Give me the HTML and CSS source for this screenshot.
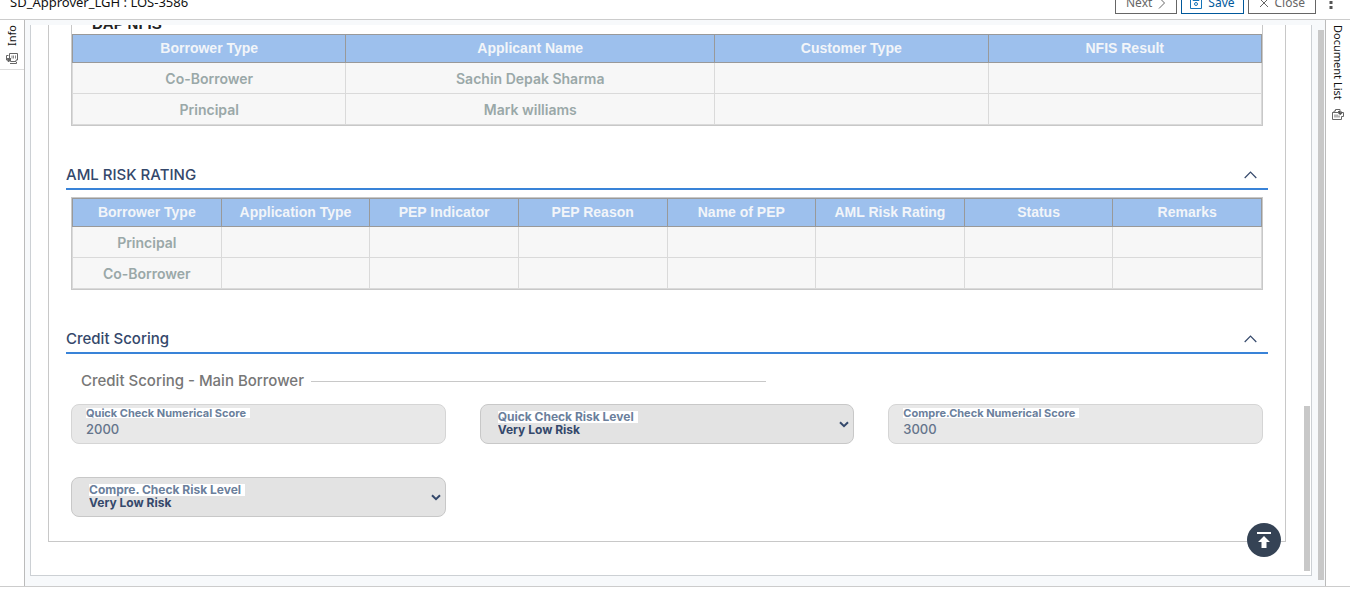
FILE: index.html
```
<!DOCTYPE html>
<html lang="en">
<head>
<meta charset="utf-8">
<title>SD_Approver_LGH : LOS-3586</title>
<link rel="stylesheet" href="styles.css">
</head>
<body>
<div class="app">
  <header class="topbar">
    <h1 class="topbar-title">SD_Approver_LGH : LOS-3586</h1>
    <div class="actions">
      <button class="btn" type="button">Next
        <svg width="8" height="12" viewBox="0 0 8 12"><path d="M1 .5 6.500 6 1 11.500" fill="none" stroke="currentColor"/></svg>
      </button>
      <button class="btn btn-save" type="button">
        <svg width="12" height="12" viewBox="0 0 12 12"><path d="M.5.5h11v11H.5zM3 1v2.500h6V1" fill="none" stroke="#1473b8"/><circle cx="6" cy="7" r="1.500" fill="none" stroke="#1473b8"/></svg>
        Save</button>
      <button class="btn" type="button">
        <svg width="10" height="10" viewBox="0 0 10 10"><path d="M1 1l8 8M9 1l-8 8" fill="none" stroke="currentColor"/></svg>
        Close</button>
      <button class="more" type="button" aria-label="More">
        <svg width="4" height="14" viewBox="0 0 4 14"><path d="M.5 1h3v3h-3zM.5 6h3v3h-3zM.5 11h3v3h-3z" fill="currentColor"/></svg>
      </button>
    </div>
  </header>

  <div class="workspace">
    <aside class="rail rail-left">
      <button class="rail-tab rail-info" type="button">
        <span class="rail-text rail-text-up">Info</span>
        <svg width="12" height="11" viewBox="0 0 12 11"><path d="M3.500.5h8v6.500H10v1.500H4.500V7h-1zM2.500 2.500h-2V7H2M2 5v3.500h1.500M4 10.500h6.500V9" fill="none" stroke="#666"/><path d="M6 2.500v3M7.500 2.500v3M9.500 2.500v3" stroke="#888" fill="none"/><path d="M1 5h4v3H2z" fill="#666"/></svg>
      </button>
    </aside>

    <main class="stage">
      <div class="panel">
        <div class="card">
          <section class="grid-box">
            <h2 class="grid-title">DAP NFIS</h2>
            <table class="grid">
              <colgroup><col class="col-base"><col class="col-wide"><col class="col-base"><col class="col-base"></colgroup>
              <thead><tr><th>Borrower Type</th><th>Applicant Name</th><th>Customer Type</th><th>NFIS Result</th></tr></thead>
              <tbody>
                <tr><td>Co-Borrower</td><td>Sachin Depak Sharma</td><td></td><td></td></tr>
                <tr><td>Principal</td><td>Mark williams</td><td></td><td></td></tr>
              </tbody>
            </table>
          </section>

          <div class="section-head">
            <h2>AML RISK RATING</h2>
            <button class="collapse" type="button" aria-label="Collapse AML risk rating"><svg width="13" height="8" viewBox="0 0 13 8"><path d="M.7 7 6.500 1.200 12.300 7" fill="none" stroke="currentColor" stroke-width="1.200"/></svg></button>
          </div>
          <section class="grid-box">
            <table class="grid">
              <thead><tr><th>Borrower Type</th><th>Application Type</th><th>PEP Indicator</th><th>PEP Reason</th><th>Name of PEP</th><th>AML Risk Rating</th><th>Status</th><th>Remarks</th></tr></thead>
              <tbody>
                <tr><td>Principal</td><td></td><td></td><td></td><td></td><td></td><td></td><td></td></tr>
                <tr><td>Co-Borrower</td><td></td><td></td><td></td><td></td><td></td><td></td><td></td></tr>
              </tbody>
            </table>
          </section>

          <div class="section-head">
            <h2>Credit Scoring</h2>
            <button class="collapse" type="button" aria-label="Collapse credit scoring"><svg width="13" height="8" viewBox="0 0 13 8"><path d="M.7 7 6.500 1.200 12.300 7" fill="none" stroke="currentColor" stroke-width="1.200"/></svg></button>
          </div>
          <section class="scoring">
            <h3 class="sub-title">Credit Scoring - Main Borrower</h3>
            <div class="fields">
              <div class="field">
                <label for="quick-score">Quick Check Numerical Score</label>
                <input id="quick-score" type="text" value="2000" readonly>
              </div>
              <div class="field field-select">
                <label for="quick-risk">Quick Check Risk Level</label>
                <select id="quick-risk"><option>Very Low Risk</option></select>
                <svg class="caret" width="10" height="7" viewBox="0 0 10 7"><path d="M1 1.200 5 5.200 9 1.200" fill="none" stroke="currentColor" stroke-width="2"/></svg>
              </div>
              <div class="field">
                <label for="compre-score">Compre.Check Numerical Score</label>
                <input id="compre-score" type="text" value="3000" readonly>
              </div>
              <div class="field field-select">
                <label for="compre-risk">Compre. Check Risk Level</label>
                <select id="compre-risk"><option>Very Low Risk</option></select>
                <svg class="caret" width="10" height="7" viewBox="0 0 10 7"><path d="M1 1.200 5 5.200 9 1.200" fill="none" stroke="currentColor" stroke-width="2"/></svg>
              </div>
            </div>
          </section>
        </div>
        <span class="scroll-thumb"></span>
        <button class="to-top" type="button" aria-label="Back to top">
          <svg width="14" height="17" viewBox="0 0 14 17"><path d="M0 0h14v2H0zM7 4l6 6H9.500v6h-5v-6H1z" fill="#fff"/></svg>
        </button>
      </div>
      <div class="scroll-track"></div>
    </main>

    <aside class="rail rail-right">
      <button class="rail-tab" type="button">
        <span class="rail-text">Document List</span>
        <svg width="12" height="11" viewBox="0 0 12 11"><path d="M.5 3.500H2V2h1.500V.5H8V2M.5 3.500v7h9v-3M.5 3.500h6M3 5.500v3M5 5.500v3M7 6.500v2M9.500 7.500h2v-4H9V2" fill="none" stroke="#666"/><path d="M6 2h2.500v1.500H11L8.500 6 6.500 5z" fill="#555"/></svg>
      </button>
    </aside>
  </div>
</div>
</body>
</html>
```
FILE: styles.css
```
* { box-sizing: border-box; }
body {
  margin: 0;
  background: #fff;
  font-family: "Inter", "Liberation Sans", sans-serif;
}
button { font: inherit; color: inherit; background: none; border: 0; padding: 0; }
svg { display: block; flex: none; }
h1, h2, h3 { margin: 0; }

.app {
  display: grid;
  grid-template-rows: 20px minmax(0, 1fr);
  height: 100vh;
  padding-bottom: 15px;
  overflow: hidden;
}

/* Top bar */
.topbar {
  display: flex;
  align-items: flex-end;
  justify-content: space-between;
  padding: 0 16px 5px 10px;
  border-bottom: 1px solid #ccc;
  overflow: hidden;
  font-family: "Noto Sans", sans-serif;
}
.topbar-title { font-size: 13px; line-height: 24px; font-weight: 400; color: #111; }
.actions { display: flex; align-items: center; gap: 4px; }
.btn {
  display: flex;
  align-items: center;
  gap: 6px;
  height: 25px;
  padding: 2px 10px 0;
  border: 1px solid #666;
  font-size: 12px;
  line-height: 20px;
  color: #666;
}
.btn-save { padding: 2px 8px 0; border-color: #00589b; color: #00589b; }
.more { padding: 0 1px 0 9px; color: #555; }

/* Workspace */
.workspace {
  display: grid;
  grid-template-columns: 25px minmax(0, 1fr) 25px;
  border-bottom: 1px solid #ccc;
  min-height: 0;
}
.rail-left { border-right: 1px solid #bbb; }
.rail-right { border-left: 1px solid #bbb; }
.rail-tab {
  display: flex;
  flex-direction: column;
  align-items: center;
  gap: 9px;
  width: 100%;
  padding: 5px 0;
}
.rail-info { gap: 7px; border-bottom: 1px solid #ddd; }
.rail-text {
  writing-mode: vertical-rl;
  font: 11px/16px "Noto Sans", sans-serif;
  color: #111;
}
.rail-text-up { transform: rotate(180deg); }

.stage {
  display: flex;
  gap: 6px;
  min-height: 0;
  padding: 5px 1px 10px 5px;
  background: #f7f9fb;
}
.scroll-track { width: 6px; margin: 5px 0 -4px; background: #c8c8c8; }
.panel {
  position: relative;
  flex: 1;
  min-width: 0;
  display: flex;
  flex-direction: column;
  justify-content: flex-end;
  padding: 0 25px 33px 17px;
  border: 1px solid #ccd0d4;
  border-top: 0;
  background: #fff;
  overflow: hidden;
}
.card { border: 1px solid #c8c8c8; padding: 24px 17px; }
.scroll-thumb {
  position: absolute;
  right: 1px;
  bottom: 4px;
  width: 6px;
  height: 30%;
  background: #c8c8c8;
}
.to-top {
  position: absolute;
  right: 30px;
  bottom: 18px;
  display: grid;
  place-items: center;
  width: 34px;
  height: 34px;
  border-radius: 50%;
  background: #354355;
}

/* Tables */
.grid-box { margin: 0 5px; border: 1px solid #c8c8c8; }
.grid-title { padding: 4px 20px 0; font: bold 15px/20px "Liberation Sans", sans-serif; color: #222; }
.grid { width: 100%; table-layout: fixed; border-collapse: collapse; text-align: center; }
.col-base { width: 23%; }
.col-wide { width: 31%; }
.grid th {
  height: 28px;
  padding: 0 0 2px;
  border: 1px solid #999;
  background: #9dc0ed;
  font: bold 14px/20px "Liberation Sans", sans-serif;
  color: #f2f5f9;
}
.grid td {
  height: 31px;
  padding: 2px 0 0;
  border: 1px solid #dadada;
  background: #f7f7f7;
  font-size: 14px;
  line-height: 20px;
  font-weight: 600;
  color: #9aa8a8;
}

/* Sections */
.section-head {
  display: flex;
  align-items: center;
  justify-content: space-between;
  height: 32px;
  margin: 32px 0 7px;
  padding: 4px 11px 0 0;
  border-bottom: 2px solid #3983d8;
  color: #34486b;
}
.section-head h2 { font-size: 15px; line-height: 20px; font-weight: 500; }
.scoring { padding: 10px 5px 0; }
.sub-title {
  display: flex;
  align-items: center;
  gap: 7px;
  width: 58.33%;
  padding-left: 10px;
  margin-bottom: 13px;
  font-size: 15px;
  line-height: 20px;
  font-weight: 500;
  color: #777;
}
.sub-title::after { content: ""; flex: 1; height: 1px; background: #c8c8c8; }

.fields {
  display: grid;
  grid-template-columns: repeat(3, minmax(0, 1fr));
  gap: 33px 34px;
}
.field { position: relative; display: flex; }
.field label {
  position: absolute;
  top: 4px;
  left: 15px;
  padding-right: 4px;
  background: #fff;
  font-size: 11px;
  line-height: 10px;
  font-weight: 700;
  color: #6b7f9c;
}
.field input, .field select {
  width: 100%;
  height: 40px;
  margin: 0;
  border: 1px solid #d5d5d5;
  border-radius: 8px;
  background: #e8e8e8;
  font: 500 13px/16px "Inter", sans-serif;
  color: #64748b;
}
.field input { padding: 9px 14px 0; }
.field-select label { top: 7px; left: 18px; font-size: 12px; line-height: 12px; }
.field select {
  appearance: none;
  padding: 11px 17px 0;
  border-color: #c8c8c8;
  background: #e3e3e3;
  font-size: 12px;
  font-weight: 700;
  color: #34486b;
}
.caret { position: absolute; right: 5px; top: 17px; color: #34486b; pointer-events: none; }
```
